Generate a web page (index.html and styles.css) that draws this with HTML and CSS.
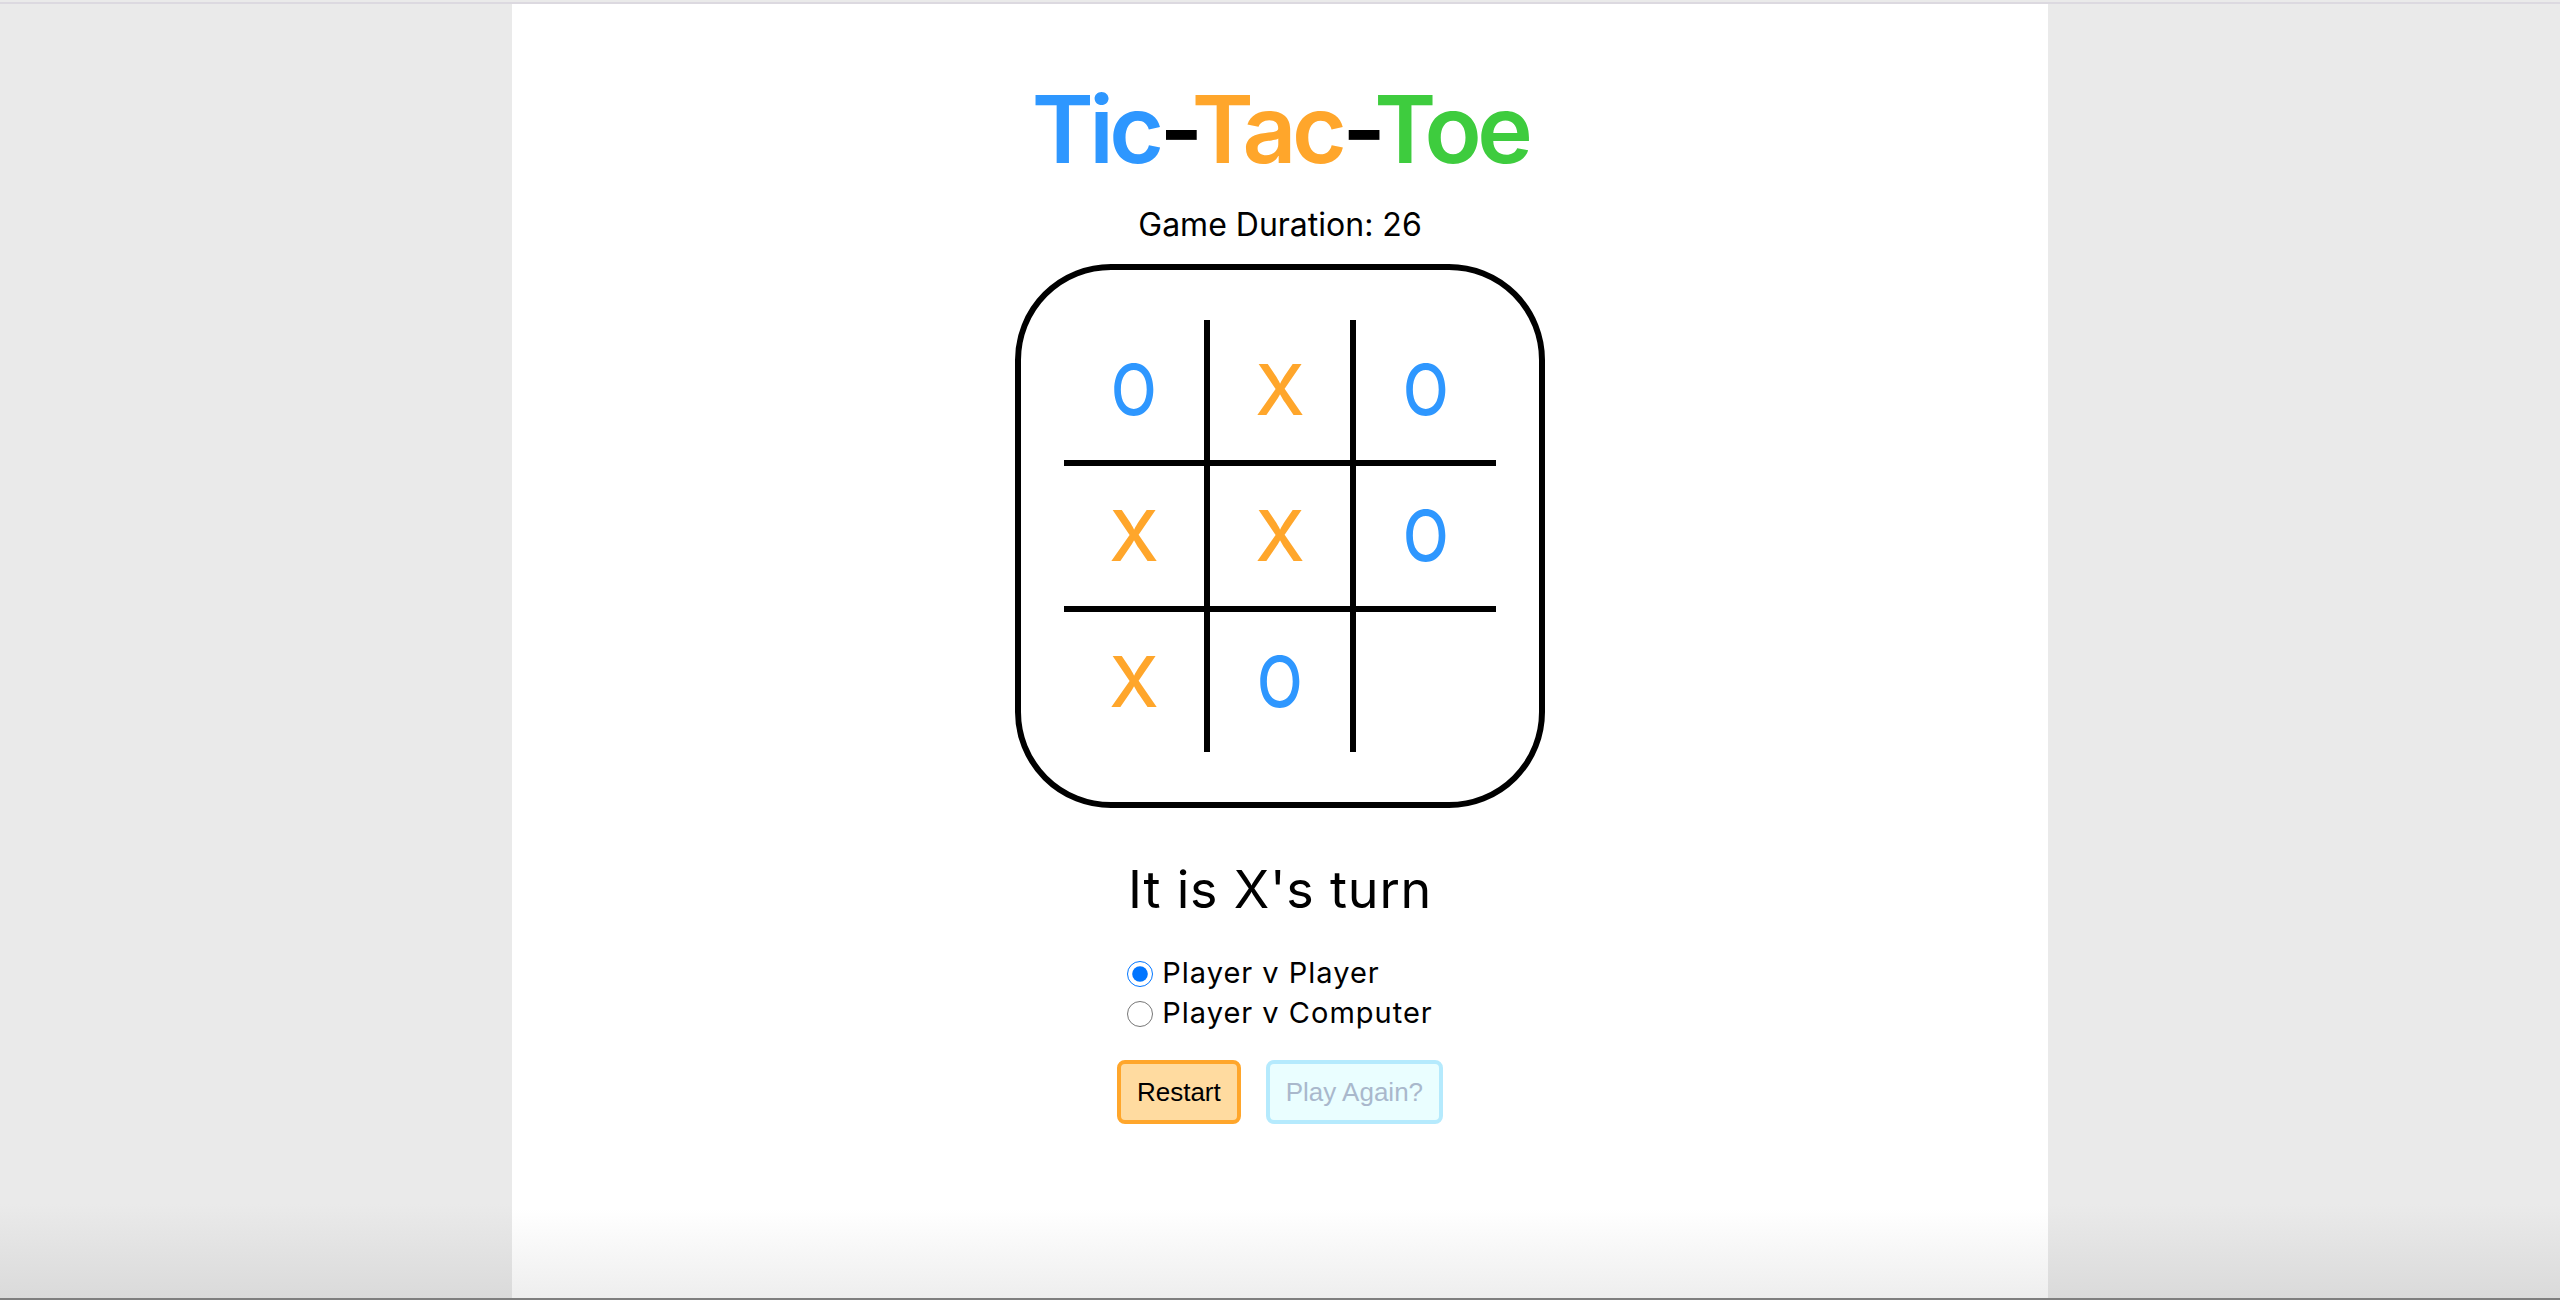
FILE: index.html
```html
<!DOCTYPE html>
<html lang="en">
<head>
<meta charset="utf-8">
<title>Tic-Tac-Toe</title>
<link rel="stylesheet" href="styles.css">
</head>
<body>
<div class="topline"></div>
<div class="stage">
  <main class="panel">
    <h1 class="title"><span class="c-blue">Tic</span>-<span class="c-orange">Tac</span>-<span class="c-green">Toe</span></h1>
    <p class="duration">Game Duration: 26</p>
    <div class="board">
      <div class="grid">
        <div class="cell o"><span class="mark-o">O</span></div>
        <div class="cell x">X</div>
        <div class="cell o"><span class="mark-o">O</span></div>
        <div class="cell x">X</div>
        <div class="cell x">X</div>
        <div class="cell o"><span class="mark-o">O</span></div>
        <div class="cell x">X</div>
        <div class="cell o"><span class="mark-o">O</span></div>
        <div class="cell"></div>
      </div>
    </div>
    <p class="turn">It is X's turn</p>
    <div class="modes">
      <label class="mode"><input type="radio" name="mode" checked>Player v Player</label>
      <label class="mode"><input type="radio" name="mode">Player v Computer</label>
    </div>
    <div class="actions">
      <button class="btn btn-restart">Restart</button>
      <button class="btn btn-again" disabled>Play Again?</button>
    </div>
  </main>
</div>
<div class="bottomline"></div>
</body>
</html>
```

FILE: styles.css
```css
html, body {
  margin: 0;
  padding: 0;
}
body {
  background: #eaeaea;
  font-family: Inter, "Noto Sans", sans-serif;
  color: #000;
  padding-top: 2px;
  height: 1300px;
  box-sizing: border-box;
  overflow: hidden;
}
.topline {
  height: 2px;
  background: #dcd9e0;
}
.stage {
  height: 1294px;
  display: flex;
  justify-content: center;
  background: linear-gradient(to bottom, #eaeaea 0, #eaeaea 1200px, #dadada 1294px);
}
.panel {
  width: 1536px;
  display: flex;
  flex-direction: column;
  align-items: center;
  background: linear-gradient(to bottom, #ffffff 0, #ffffff 1205px, #eeeeee 1294px);
}
.title {
  margin: 78px 0 0;
  font-size: 94px;
  line-height: 1;
  font-weight: 600;
  letter-spacing: -4.5px;
}
.c-blue { color: #2e97ff; }
.c-orange { color: #ffa62b; }
.c-green { color: #3ecc3e; }
.duration {
  margin: 33px 0 0;
  font-size: 32px;
  line-height: 1;
}
.board {
  margin-top: 23px;
  box-sizing: border-box;
  width: 530px;
  height: 544px;
  border: 6px solid #000;
  border-radius: 96px;
  padding: 50px 43px;
}
.grid {
  display: grid;
  grid-template-columns: repeat(3, 140px);
  grid-template-rows: repeat(3, 140px);
  gap: 6px;
  background: #000;
}
.cell {
  background: #fff;
  display: flex;
  align-items: center;
  justify-content: center;
  font-size: 70px;
  font-weight: 500;
  line-height: 1;
}
.cell.x { color: #ffa62b; }
.cell.o { color: #2e97ff; }
.mark-o {
  display: inline-block;
  transform: scaleX(0.85);
}
.turn {
  margin: 56px 0 0;
  font-size: 52px;
  line-height: 1;
  letter-spacing: 0.8px;
}
.modes {
  margin-top: 36px;
  display: flex;
  flex-direction: column;
  align-items: flex-start;
}
.mode {
  display: flex;
  align-items: center;
  height: 40px;
  font-size: 29px;
  letter-spacing: 1px;
}
.mode input {
  width: 26px;
  height: 26px;
  margin: 4px 9px 0 0;
}
.actions {
  margin-top: 28px;
  display: flex;
  gap: 25px;
}
.btn {
  font-family: "Liberation Sans", Arial, sans-serif;
  font-size: 26px;
  line-height: 30px;
  height: 64px;
  padding: 0 16px;
  border-radius: 8px;
  border: 4px solid;
}
.btn-restart {
  background: #ffdba0;
  border-color: #ffa62b;
  color: #000;
}
.btn-again {
  background: #eafeff;
  border-color: #b5eafd;
  color: #a9b8cc;
}
.bottomline {
  height: 2px;
  background: #7f7f7f;
}
```
